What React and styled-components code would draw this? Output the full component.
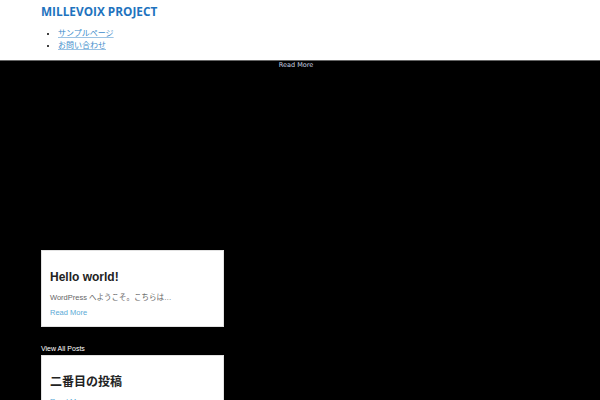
import React from 'react';
import styled, { createGlobalStyle } from 'styled-components';

const GlobalStyle = createGlobalStyle`
    html, body {
        margin: 0;
        padding: 0;
        background: #000;
    }
    body {
        font-family: "Liberation Sans", "Noto Sans CJK JP", sans-serif;
    }
`

const menu = ['サンプルページ', 'お問い合わせ'];

const posts = [
    { title: 'Hello world!', excerpt: 'WordPress へようこそ。こちらは…' },
    { title: '二番目の投稿' },
];

const App = () => {
    return (
        <>
            <GlobalStyle />
            <Header>
                <Inner>
                    <SiteTitle href="#">MILLEVOIX PROJECT</SiteTitle>
                    <Menu>
                        {menu.map((item) => (
                            <MenuItem key={item}>
                                <a href="#">{item}</a>
                            </MenuItem>
                        ))}
                    </Menu>
                </Inner>
            </Header>
            <Hero>
                <Caption href="#">Read More</Caption>
            </Hero>
            <Posts>
                <Card>
                    <CardTitle>{posts[0].title}</CardTitle>
                    <Excerpt>{posts[0].excerpt}</Excerpt>
                    <MoreLink href="#">Read More</MoreLink>
                </Card>
                <AllPosts href="#">View All Posts</AllPosts>
                <Card>
                    <CardTitle>{posts[1].title}</CardTitle>
                    <MoreLink href="#" $tight>Read More</MoreLink>
                </Card>
            </Posts>
        </>
    );
};

export default App;

const Header = styled.header`
    background: #fff;
    height: 60px;
    border-bottom: 1px solid #666;
`
const Inner = styled.div`
    padding: 3px 41px 0;
`
const SiteTitle = styled.a`
    display: block;
    font-family: "Open Sans", "Noto Sans", sans-serif;
    font-weight: 700;
    font-size: 11.8px;
    line-height: 16px;
    color: #1e73be;
    text-decoration: none;
`
const Menu = styled.ul`
    margin: 8px 0 0;
    padding-left: 17px;
    list-style: disc;
    font-size: 8px;
    line-height: 11px;
    color: #000;
`
const MenuItem = styled.li`
    a {
        color: #3d8ccb;
        font-family: "Noto Sans CJK JP", sans-serif;
        text-decoration: underline;
        text-decoration-color: #9cc3e4;
    }
`
const Hero = styled.section`
    height: 189px;
    display: flex;
    justify-content: center;
    align-items: flex-start;
`
const Caption = styled.a`
    margin-left: -8px;
    font-family: "DejaVu Sans", sans-serif;
    font-size: 6.5px;
    line-height: 8px;
    color: #c9d2e2;
    text-decoration: none;
`
const Posts = styled.section`
    padding: 0 41px;
    display: flex;
    flex-direction: column;
    align-items: flex-start;
`
const Card = styled.article`
    width: 165px;
    background: #fff;
    border: 1px solid #e2e2e2;
    padding: 19px 8px 8px;
    display: flex;
    flex-direction: column;
    align-items: flex-start;
`
const CardTitle = styled.h2`
    margin: 0;
    font-size: 12px;
    line-height: 14px;
    font-weight: 700;
    color: #222;
`
const Excerpt = styled.p`
    margin: 8px 0 0;
    font-size: 7.5px;
    line-height: 11px;
    color: #666;
`
const MoreLink = styled.a`
    margin-top: ${(p) => (p.$tight ? '7px' : '4px')};
    font-size: 7.5px;
    line-height: 11px;
    color: #5aaad6;
    text-decoration: none;
`
const AllPosts = styled.a`
    margin: 18px 0 2px;
    font-size: 7px;
    line-height: 8px;
    color: #fff;
    text-decoration: none;
`
